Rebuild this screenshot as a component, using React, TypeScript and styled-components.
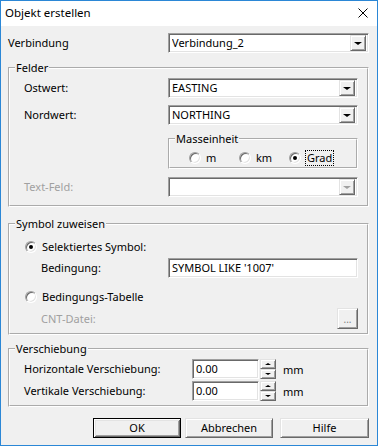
import React from "react";
import styled, { createGlobalStyle, css } from "styled-components";

const Global = createGlobalStyle`
  html, body { margin: 0; padding: 0; background: #f0f0f0; }
  * { box-sizing: border-box; }
  body { font-family: "Noto Sans", "Liberation Sans", sans-serif; font-size: 11px; color: #000; }
`;

const sunken = css`
  border: 1px solid;
  border-color: #a0a0a0 #ffffff #ffffff #a0a0a0;
  box-shadow: inset 1px 1px 0 #696969, inset -1px -1px 0 #e3e3e3;
`;

const raised = css`
  border: 1px solid;
  border-color: #e3e3e3 #696969 #696969 #e3e3e3;
  box-shadow: inset 1px 1px 0 #ffffff, inset -1px -1px 0 #a0a0a0;
  background: #f0f0f0;
`;

const Window = styled.div`
  width: 378px;
  height: 446px;
  border: 1px solid #2b87d6;
  display: flex;
  flex-direction: column;
  background: #f0f0f0;
  overflow: hidden;
`;

const TitleBar = styled.div`
  height: 25px;
  background: #ffffff;
  display: flex;
  align-items: center;
  justify-content: space-between;
  padding: 0 9px 1px 4px;
  flex: none;
`;

const TitleText = styled.span`
  font-size: 11.5px;
  line-height: 16px;
`;

const Body = styled.div`
  flex: 1;
  display: flex;
  flex-direction: column;
  padding: 7px 8px 0 7px;
`;

const Row = styled.div<{ $label: number; $mt?: number; $h?: number }>`
  display: grid;
  grid-template-columns: ${(p) => p.$label}px 1fr;
  align-items: center;
  margin-top: ${(p) => p.$mt ?? 0}px;
  min-height: ${(p) => p.$h ?? 20}px;
`;

const Label = styled.span<{ $disabled?: boolean; $indent?: number }>`
  color: ${(p) => (p.$disabled ? "#a0a0a0" : "#000")};
  padding-left: ${(p) => p.$indent ?? 0}px;
  line-height: 16px;
  white-space: nowrap;
`;

const Field = styled.div<{ $w?: number }>`
  ${sunken};
  background: #fff;
  height: 20px;
  width: ${(p) => (p.$w ? `${p.$w}px` : "auto")};
  display: flex;
  align-items: center;
  padding: 2px 2px 2px 3px;
  line-height: 16px;
  white-space: nowrap;
`;

const FieldText = styled.span`
  flex: 1;
  overflow: hidden;
`;

const DropBtn = styled.div`
  ${raised};
  width: 16px;
  height: 16px;
  flex: none;
  display: flex;
  align-items: center;
  justify-content: center;
`;

const Arrow = styled.span<{ $dir?: "up" | "down"; $disabled?: boolean; $size?: number }>`
  width: 0;
  height: 0;
  border-left: ${(p) => p.$size ?? 4}px solid transparent;
  border-right: ${(p) => p.$size ?? 4}px solid transparent;
  ${(p) =>
    p.$dir === "up"
      ? css`border-bottom: ${(p.$size ?? 4) - 1}px solid ${p.$disabled ? "#a0a0a0" : "#000"};`
      : css`border-top: ${(p.$size ?? 4) - 1}px solid ${p.$disabled ? "#a0a0a0" : "#000"};`}
`;

const Group = styled.fieldset<{ $mt?: number }>`
  margin: ${(p) => p.$mt ?? 0}px 0 0 0;
  padding: 0;
  min-width: 0;
  border: 2px groove #ffffff;
`;

const Legend = styled.legend`
  margin-left: 5px;
  padding: 0 1px;
  font-size: 11px;
  line-height: 16px;
`;

const GroupBody = styled.div<{ $pad: string }>`
  padding: ${(p) => p.$pad};
  display: flex;
  flex-direction: column;
`;

const RadioRow = styled.label<{ $mt?: number; $indent?: number }>`
  display: flex;
  align-items: center;
  gap: 5px;
  height: 16px;
  margin-top: ${(p) => p.$mt ?? 0}px;
  padding-left: ${(p) => p.$indent ?? 0}px;
  line-height: 16px;
`;

const RadioCircle = styled.span<{ $checked?: boolean }>`
  width: 12px;
  height: 12px;
  border-radius: 50%;
  flex: none;
  background: #fff;
  border: 1px solid;
  border-color: #a0a0a0 #ffffff #ffffff #a0a0a0;
  box-shadow: inset 1px 1px 0 #696969, inset -1px -1px 0 #e3e3e3;
  display: flex;
  align-items: center;
  justify-content: center;
  &::after {
    content: "";
    width: 4px;
    height: 4px;
    border-radius: 50%;
    background: ${(p) => (p.$checked ? "#000" : "transparent")};
  }
`;

const Focus = styled.span`
  outline: 1px dotted #000;
  outline-offset: 0;
  padding: 0 1px;
  line-height: 14px;
`;

const UnitGroupRow = styled.div`
  display: grid;
  grid-template-columns: 50px 50px 1fr;
  padding: 3px 0 1px 19px;
`;

const Spin = styled.div`
  display: flex;
  flex-direction: column;
  width: 16px;
  height: 20px;
  margin-left: 1px;
`;

const SpinBtn = styled.div`
  ${raised};
  height: 10px;
  display: flex;
  align-items: center;
  justify-content: center;
`;

const NumberRow = styled.div<{ $mt?: number }>`
  display: grid;
  grid-template-columns: 168px 67px 16px auto;
  align-items: center;
  margin-top: ${(p) => p.$mt ?? 0}px;
`;

const Unit = styled.span`
  padding-left: 8px;
`;

const SmallBtn = styled.div`
  ${raised};
  width: 21px;
  height: 21px;
  display: flex;
  align-items: flex-end;
  justify-content: center;
  padding-bottom: 4px;
  color: #808080;
  font-size: 10px;
  line-height: 10px;
`;

const CntRow = styled.div`
  display: flex;
  align-items: center;
  justify-content: space-between;
  margin-top: 3px;
  padding-left: 16px;
`;

const ButtonBar = styled.div`
  display: flex;
  justify-content: flex-end;
  margin-top: 11px;
`;

const Button = styled.div<{ $w: number; $ml?: number; $default?: boolean }>`
  width: ${(p) => p.$w}px;
  height: 20px;
  margin-left: ${(p) => p.$ml ?? 0}px;
  display: flex;
  align-items: center;
  justify-content: center;
  background: #f0f0f0;
  line-height: 16px;
  ${(p) =>
    p.$default
      ? css`
          border: 1px solid #000;
          box-shadow: inset 1px 1px 0 #ffffff, inset -1px -1px 0 #696969, inset 2px 2px 0 #e3e3e3, inset -2px -2px 0 #a0a0a0;
        `
      : raised}
`;

const Combo: React.FC<{ value?: string; disabled?: boolean; w?: number }> = ({ value, disabled, w }) => (
  <Field $w={w}>
    <FieldText>{value}</FieldText>
    <DropBtn>
      <Arrow $disabled={disabled} />
    </DropBtn>
  </Field>
);

const CloseIcon = () => (
  <svg width="10" height="10" viewBox="0 0 10 10">
    <path d="M0.5 0.5 L9.5 9.5 M9.5 0.5 L0.5 9.5" stroke="#000" strokeWidth="1" fill="none" />
  </svg>
);

export default function App() {
  return (
    <>
      <Global />
      <Window>
        <TitleBar>
          <TitleText>Objekt erstellen</TitleText>
          <CloseIcon />
        </TitleBar>
        <Body>
          <Row $label={160}>
            <Label>Verbindung</Label>
            <Combo value="Verbindung_2" />
          </Row>

          <Group $mt={7}>
            <Legend>Felder</Legend>
            <GroupBody $pad="2px 9px 8px 14px">
              <Row $label={144}>
                <Label>Ostwert:</Label>
                <Combo value="EASTING" />
              </Row>
              <Row $label={144} $mt={7}>
                <Label>Nordwert:</Label>
                <Combo value="NORTHING" />
              </Row>
              <Row $label={144} $mt={6}>
                <span />
                <Group>
                  <Legend>Masseinheit</Legend>
                  <UnitGroupRow>
                    <RadioRow>
                      <RadioCircle />
                      <span>m</span>
                    </RadioRow>
                    <RadioRow>
                      <RadioCircle />
                      <span>km</span>
                    </RadioRow>
                    <RadioRow>
                      <RadioCircle $checked />
                      <Focus>Grad</Focus>
                    </RadioRow>
                  </UnitGroupRow>
                </Group>
              </Row>
              <Row $label={144} $mt={8}>
                <Label $disabled>Text-Feld:</Label>
                <Combo disabled />
              </Row>
            </GroupBody>
          </Group>

          <Group $mt={9}>
            <Legend>Symbol zuweisen</Legend>
            <GroupBody $pad="7px 9px 4px 15px">
              <RadioRow>
                <RadioCircle $checked />
                <span>Selektiertes Symbol:</span>
              </RadioRow>
              <Row $label={143} $mt={3}>
                <Label $indent={16}>Bedingung:</Label>
                <Field>
                  <FieldText>SYMBOL LIKE '1007'</FieldText>
                </Field>
              </Row>
              <RadioRow $mt={11}>
                <RadioCircle />
                <span>Bedingungs-Tabelle</span>
              </RadioRow>
              <CntRow>
                <Label $disabled>CNT-Datei:</Label>
                <SmallBtn>...</SmallBtn>
              </CntRow>
            </GroupBody>
          </Group>

          <Group $mt={6}>
            <Legend>Verschiebung</Legend>
            <GroupBody $pad="2px 9px 4px 14px">
              <NumberRow>
                <Label>Horizontale Verschiebung:</Label>
                <Field>
                  <FieldText>0.00</FieldText>
                </Field>
                <Spin>
                  <SpinBtn>
                    <Arrow $dir="up" $size={3} />
                  </SpinBtn>
                  <SpinBtn>
                    <Arrow $dir="down" $size={3} />
                  </SpinBtn>
                </Spin>
                <Unit>mm</Unit>
              </NumberRow>
              <NumberRow $mt={2}>
                <Label>Vertikale Verschiebung:</Label>
                <Field>
                  <FieldText>0.00</FieldText>
                </Field>
                <Spin>
                  <SpinBtn>
                    <Arrow $dir="up" $size={3} />
                  </SpinBtn>
                  <SpinBtn>
                    <Arrow $dir="down" $size={3} />
                  </SpinBtn>
                </Spin>
                <Unit>mm</Unit>
              </NumberRow>
            </GroupBody>
          </Group>

          <ButtonBar>
            <Button $w={88} $default>OK</Button>
            <Button $w={88} $ml={4}>Abbrechen</Button>
            <Button $w={89} $ml={7}>Hilfe</Button>
          </ButtonBar>
        </Body>
      </Window>
    </>
  );
}
